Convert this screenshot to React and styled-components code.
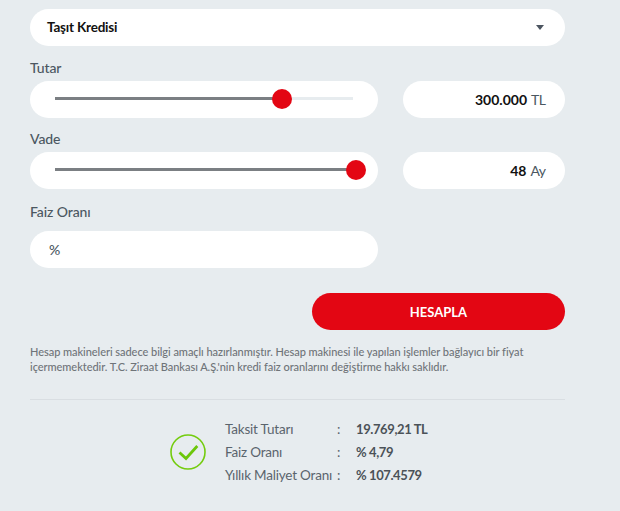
import React from 'react';
import styled, { createGlobalStyle } from 'styled-components';

const GlobalStyle = createGlobalStyle`
  html, body {
    margin: 0;
    padding: 0;
    background: #e7ecef;
    font-family: 'Lato', 'Liberation Sans', sans-serif;
  }
`;

const Page = styled.div`
  width: 535px;
  padding: 9px 55px 0 30px;
`;

const Pill = styled.div`
  height: 36.5px;
  box-sizing: border-box;
  background: #fff;
  border-radius: 19px;
  display: flex;
  align-items: center;
`;

const SelectBox = styled(Pill)`
  justify-content: space-between;
  padding: 0 21px 0 17px;
  font-size: 13.5px;
  letter-spacing: -0.2px;
  font-weight: 700;
  color: #111;
`;

const Caret = styled.span`
  width: 0;
  height: 0;
  border-left: 4.5px solid transparent;
  border-right: 4.5px solid transparent;
  border-top: 5px solid #4c5560;
`;

const Field = styled.div`
  margin-top: ${({ $top }) => $top}px;
`;

const Label = styled.div`
  font-size: 14px;
  line-height: 17px;
  letter-spacing: -0.1px;
  font-weight: 500;
  color: #4b5761;
  margin-bottom: ${({ $gap }) => $gap || 5}px;
`;

const FieldRow = styled.div`
  display: grid;
  grid-template-columns: 348px 162px;
  column-gap: 25px;
`;

const SliderBox = styled(Pill)`
  padding: 0 25px;
`;

const Track = styled.div`
  position: relative;
  flex: 1;
  height: 3px;
  margin-top: -1px;
  background: #e7ecef;
`;

const TrackFill = styled.div`
  height: 100%;
  background: #7b7f83;
`;

const Thumb = styled.div`
  position: absolute;
  top: 50%;
  width: 20px;
  height: 20px;
  margin: -10px 0 0 -10px;
  border-radius: 50%;
  background: #e30613;
`;

const ValueBox = styled(Pill)`
  justify-content: flex-end;
  gap: 4px;
  padding: 0 19.5px;
  font-size: 14px;
  color: #4b5761;
`;

const Strong = styled.strong`
  color: #111;
  font-weight: 700;
`;

const Unit = styled.span`
  letter-spacing: -0.5px;
`;

const RateBox = styled(Pill)`
  width: 348px;
  padding: 0 19px;
  font-size: 14px;
  font-weight: 500;
  color: #4b5761;
`;

const Actions = styled.div`
  display: flex;
  justify-content: flex-end;
  margin-top: 25.5px;
`;

const SubmitButton = styled.button`
  width: 253px;
  height: 37px;
  border: 0;
  border-radius: 19px;
  background: #e30613;
  color: #fff;
  font-family: inherit;
  font-size: 13px;
  font-weight: 700;
`;

const Disclaimer = styled.p`
  margin: 14px 0 0;
  font-size: 11px;
  line-height: 15px;
  letter-spacing: -0.05px;
  color: #6f7479;
  font-weight: 500;
`;

const Divider = styled.hr`
  margin: 25px 0 0;
  border: 0;
  border-top: 1px solid #d9dee2;
`;

const Result = styled.div`
  display: flex;
  align-items: center;
  margin: 17px 0 0 140px;
`;

const CheckIcon = styled.svg`
  width: 36px;
  height: 36px;
  margin-right: 19px;
`;

const ResultTable = styled.div`
  display: grid;
  grid-template-columns: 112px 19px auto;
  grid-auto-rows: 23px;
  align-items: center;
  font-size: 13.5px;
  letter-spacing: -0.2px;
  white-space: nowrap;
  color: #5a646d;
`;

const ResultValue = styled.div`
  font-size: 13px;
  font-weight: 700;
  letter-spacing: -0.4px;
  color: #4b5258;
`;

const sliders = [
  { label: 'Tutar', top: 13.5, percent: 76.2, value: '300.000', unit: 'TL' },
  { label: 'Vade', top: 12.5, percent: 100, thumb: 101, value: '48', unit: 'Ay' },
];

const results = [
  { label: 'Taksit Tutarı', value: '19.769,21 TL' },
  { label: 'Faiz Oranı', value: '% 4,79' },
  { label: 'Yıllık Maliyet Oranı', value: '% 107.4579' },
];

const App = () => (
  <Page>
    <GlobalStyle />
    <SelectBox>
      Taşıt Kredisi
      <Caret />
    </SelectBox>
    {sliders.map((item) => (
      <Field key={item.label} $top={item.top}>
        <Label>{item.label}</Label>
        <FieldRow>
          <SliderBox>
            <Track>
              <TrackFill style={{ width: `${item.percent}%` }} />
              <Thumb style={{ left: `${item.thumb || item.percent}%` }} />
            </Track>
          </SliderBox>
          <ValueBox>
            <Strong>{item.value}</Strong>
            <Unit>{item.unit}</Unit>
          </ValueBox>
        </FieldRow>
      </Field>
    ))}
    <Field $top={14}>
      <Label $gap={11.5}>Faiz Oranı</Label>
      <RateBox>%</RateBox>
    </Field>
    <Actions>
      <SubmitButton>HESAPLA</SubmitButton>
    </Actions>
    <Disclaimer>
      Hesap makineleri sadece bilgi amaçlı hazırlanmıştır. Hesap makinesi ile yapılan işlemler bağlayıcı bir fiyat
      içermemektedir. T.C. Ziraat Bankası A.Ş.'nin kredi faiz oranlarını değiştirme hakkı saklıdır.
    </Disclaimer>
    <Divider />
    <Result>
      <CheckIcon viewBox="0 0 36 36">
        <circle cx="18" cy="18" r="17" fill="none" stroke="#74cc0e" strokeWidth="1.6" />
        <path d="M9.5 18.5l6.5 6L27.3 12" fill="none" stroke="#6cc70a" strokeWidth="2.8" />
      </CheckIcon>
      <ResultTable>
        {results.map((row) => (
          <React.Fragment key={row.label}>
            <div>{row.label}</div>
            <div>:</div>
            <ResultValue>{row.value}</ResultValue>
          </React.Fragment>
        ))}
      </ResultTable>
    </Result>
  </Page>
);

export default App;
